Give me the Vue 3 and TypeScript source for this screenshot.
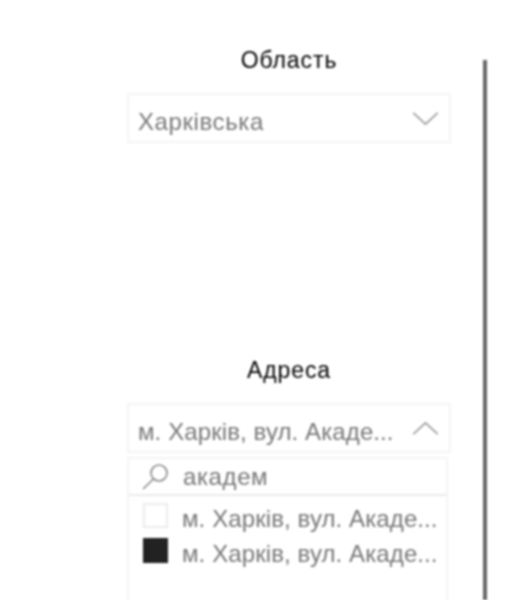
<template>
  <div class="page">
    <div class="filters">
      <section class="slicer region">
        <h3 class="slicer-title">Область</h3>
        <div class="select">
          <span class="select-value">Харківська</span>
          <svg class="chevron" viewBox="0 0 28 16" fill="none">
            <path d="M1 2 L14 14 L27 2" />
          </svg>
        </div>
      </section>

      <section class="slicer address">
        <h3 class="slicer-title">Адреса</h3>
        <div class="select">
          <span class="select-value long">м. Харків, вул. Акаде...</span>
          <svg class="chevron" viewBox="0 0 28 16" fill="none">
            <path d="M1 14 L14 2 L27 14" />
          </svg>
        </div>
        <div class="dropdown">
          <div class="search">
            <svg class="search-icon" viewBox="0 0 28 28" fill="none">
              <circle cx="18" cy="10" r="8" />
              <path d="M12.5 16 L2 26" />
            </svg>
            <span class="search-text">академ</span>
          </div>
          <ul class="options">
            <li v-for="opt in options" :key="opt.id" class="option">
              <span class="checkbox" :class="{ checked: opt.checked }"></span>
              <span class="option-text">{{ opt.text }}</span>
            </li>
          </ul>
        </div>
      </section>
    </div>
    <div class="divider"></div>
  </div>
</template>

<script setup lang="ts">
interface AddressOption {
  id: number
  text: string
  checked: boolean
}

const options: AddressOption[] = [
  { id: 1, text: 'м. Харків, вул. Акаде...', checked: false },
  { id: 2, text: 'м. Харків, вул. Акаде...', checked: true }
]
</script>

<style scoped>
.page {
  display: flex;
  width: 505px;
  height: 600px;
  overflow: hidden;
  background: #fff;
  font-family: "Liberation Sans", Arial, sans-serif;
  filter: blur(0.8px);
}

.filters {
  width: 324px;
  margin-left: 127px;
  flex-shrink: 0;
}

.slicer-title {
  margin: 0;
  font-size: 23px;
  line-height: 26px;
  font-weight: 400;
  letter-spacing: 0.9px;
  color: #000;
  text-align: center;
}

.region {
  padding-top: 47px;
  height: 357px;
  box-sizing: border-box;
}

.select {
  display: flex;
  align-items: center;
  justify-content: space-between;
  box-sizing: border-box;
  height: 50px;
  margin-top: 20px;
  padding: 8px 10px 0 9px;
  border: 2px solid #f4f4f4;
  color: #777;
}

.select-value {
  font-size: 24px;
  letter-spacing: 0.6px;
  white-space: nowrap;
}

.select-value.long {
  letter-spacing: 0.1px;
}

.chevron {
  width: 27px;
  height: 15px;
  flex-shrink: 0;
  margin-top: -8px;
}

.chevron path {
  stroke: #999;
  stroke-width: 1.6;
}

.dropdown {
  margin-top: 4px;
  width: 321px;
  height: 200px;
  border: 2px solid #f4f4f4;
  border-bottom: none;
  box-sizing: border-box;
}

.search {
  display: flex;
  align-items: center;
  height: 35px;
  padding-left: 12px;
  border-bottom: 2px solid #ebebeb;
}

.search-icon {
  width: 28px;
  height: 28px;
}

.search-icon circle,
.search-icon path {
  stroke: #888;
  stroke-width: 1.6;
}

.search-text {
  margin-left: 14px;
  font-size: 24px;
  letter-spacing: 0.6px;
  color: #777;
}

.options {
  list-style: none;
  margin: 0;
  padding: 2px 0 0 14px;
}

.option {
  display: flex;
  align-items: center;
  height: 35px;
}

.checkbox {
  width: 25px;
  height: 25px;
  box-sizing: border-box;
  border: 2px solid #ececec;
  flex-shrink: 0;
}

.checkbox.checked {
  background: #222;
  border-color: #222;
}

.option-text {
  margin-left: 14px;
  padding-top: 6px;
  font-size: 24px;
  letter-spacing: 0.1px;
  color: #777;
  white-space: nowrap;
}

.divider {
  width: 4px;
  margin: 60px 0 0 32px;
  background: #666;
}
</style>
